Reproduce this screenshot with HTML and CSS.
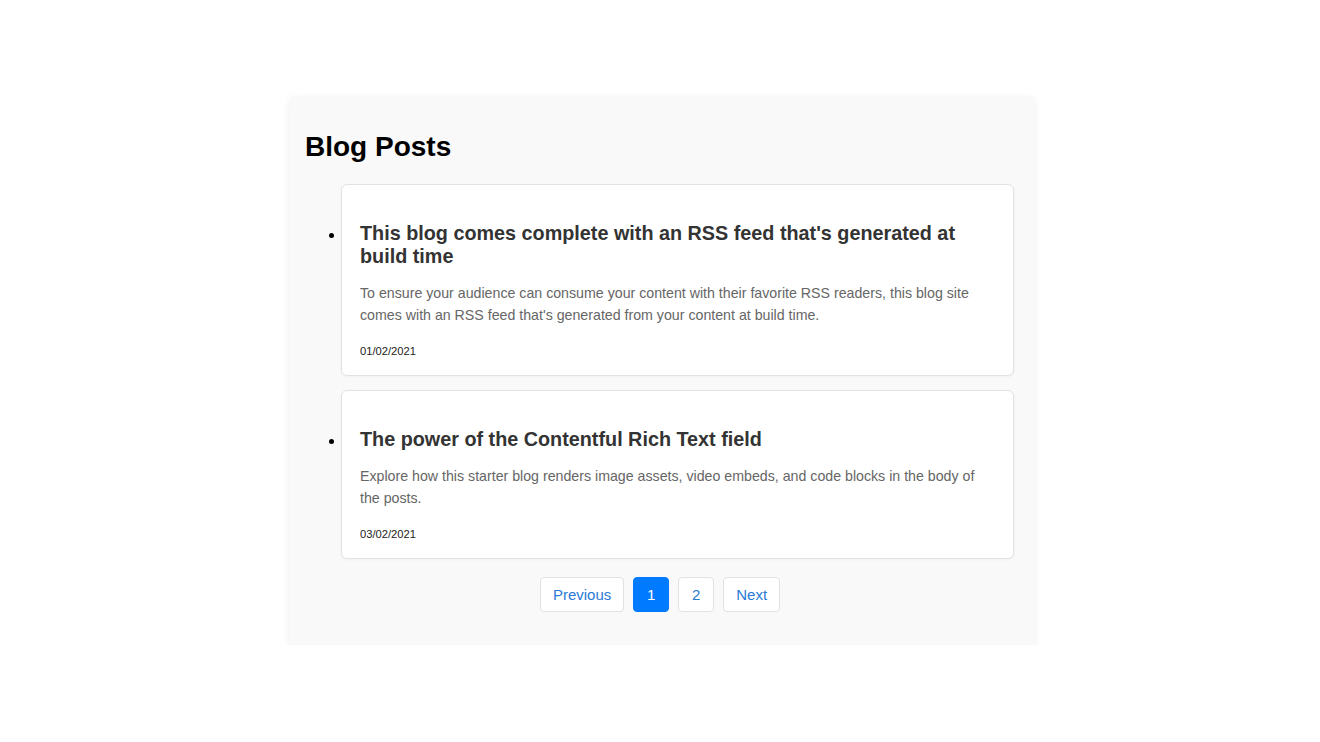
FILE: index.html
```html
<!DOCTYPE html>
<html lang="en">
<head>
  <meta charset="UTF-8" />
  <meta name="viewport" content="width=device-width, initial-scale=1.0"/>
  <title>Blog Posts</title>
  <link rel="stylesheet" href="styles.css">
</head>
<body>
  <div class="container">
    <h1>Blog Posts</h1>
    <ul class="post-list">
      <li>
        <div class="post-card">
          <h2>This blog comes complete with an RSS feed that's generated at build time</h2>
          <p class="excerpt">To ensure your audience can consume your content with their favorite RSS readers, this blog site comes with an RSS feed that's generated from your content at build time.</p>
          <div class="date">01/02/2021</div>
        </div>
      </li>
      <li>
        <div class="post-card">
          <h2>The power of the Contentful Rich Text field</h2>
          <p class="excerpt">Explore how this starter blog renders image assets, video embeds, and code blocks in the body of the posts.</p>
          <div class="date">03/02/2021</div>
        </div>
      </li>
    </ul>
    <div class="pagination">
      <button>Previous</button>
      <button class="active">1</button>
      <button>2</button>
      <button>Next</button>
    </div>
  </div>
</body>
</html>
```

FILE: styles.css
```css
body {
  margin: 0;
  font-family: 'Liberation Sans', Arial, sans-serif;
  background: #fff;
  color: #000;
}

.container {
  box-sizing: border-box;
  width: 744px;
  margin: 97px 0 0 calc(50% - 370px);
  padding: 15px 15px 20px;
  background: #f9f9f9;
  box-shadow: 0 2px 8px rgba(0, 0, 0, 0.08);
}

h1 {
  font-size: 28px;
  margin: 19px 0 21px;
}

.post-list {
  margin: 0 5px 0 0;
  padding-left: 36px;
  list-style: none;
}

.post-list li {
  position: relative;
  margin-bottom: 14px;
}

/* bullet dot beside the first title line */
.post-list li::before {
  content: "";
  position: absolute;
  left: -12px;
  top: 49px;
  width: 5px;
  height: 5px;
  border-radius: 50%;
  background: #000;
}

.post-list li:last-child {
  margin-bottom: 0;
}

.post-card {
  background: #fff;
  border: 1px solid #e2e2e2;
  border-radius: 6px;
  padding: 20px 18px 18px;
  box-shadow: 0 1px 3px rgba(0, 0, 0, 0.04);
}

.post-card h2 {
  font-size: 19.8px;
  color: #333;
  margin: 17px 0 14px;
}

.excerpt {
  font-size: 14.2px;
  line-height: 1.55;
  color: #666;
  margin: 0 0 19px;
}

.date {
  font-size: 11.2px;
  color: #222;
}

.pagination {
  display: flex;
  justify-content: center;
  gap: 9px;
  margin: 18px 4px 13px 0;
}

.pagination button {
  font-family: inherit;
  font-size: 15px;
  min-width: 36px;
  padding: 8px 12px;
  background: #fff;
  color: #2a7ad6;
  border: 1px solid #e2e2e2;
  border-radius: 4px;
  cursor: pointer;
}

.pagination .active {
  background: #007bff;
  border-color: #007bff;
  color: #fff;
}
```
